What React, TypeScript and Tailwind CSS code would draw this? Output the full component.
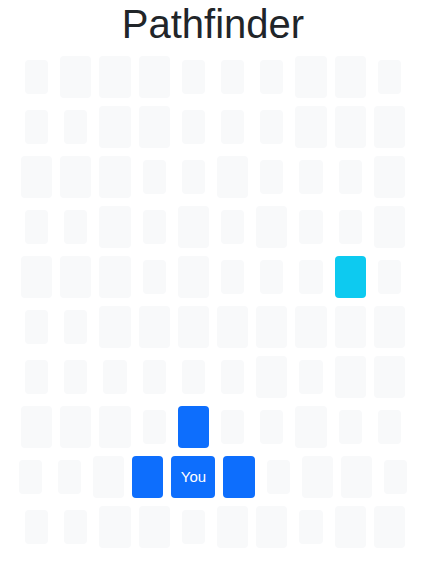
const rows = [
  "sLLLsssLLs",
  "ssLLsssLLL",
  "LLLssLsssL",
  "ssLsLsLssL",
  "LLLsLsssCs",
  "ssLLLLLLLL",
  "ssssssLsLL",
  "LLLsBssLss",
  "ssLBYBsLLs",
  "ssLLsLLsLL",
];

const Tile = ({ kind }: { kind: string }) => {
  if (kind === "Y") {
    return (
      <div className="w-[44px] h-[42px] rounded-[4px] bg-[#0d6efd] flex items-center justify-center text-white text-[15px]">
        You
      </div>
    );
  }
  if (kind === "s") {
    return (
      <div className="w-[31.2px] h-[42px] p-1">
        <div className="w-full h-full rounded-[4px] bg-[#f8f9fa]" />
      </div>
    );
  }
  const color =
    kind === "B" ? "bg-[#0d6efd]" : kind === "C" ? "bg-[#0dcaf0]" : "bg-[#f8f9fa]";
  return <div className={`w-[31.2px] h-[42px] rounded-[4px] ${color}`} />;
};

export default function App() {
  return (
    <div className="w-[426px] h-[562px] bg-white font-['Liberation_Sans',sans-serif] text-[#212529]">
      <h1 className="text-center text-[40px] leading-[1.2] mb-2">Pathfinder</h1>
      <div className="flex flex-col gap-2">
        {rows.map((row, i) => (
          <div key={i} className="flex justify-center gap-2">
            {row.split("").map((k, j) => (
              <Tile key={j} kind={k} />
            ))}
          </div>
        ))}
      </div>
    </div>
  );
}
